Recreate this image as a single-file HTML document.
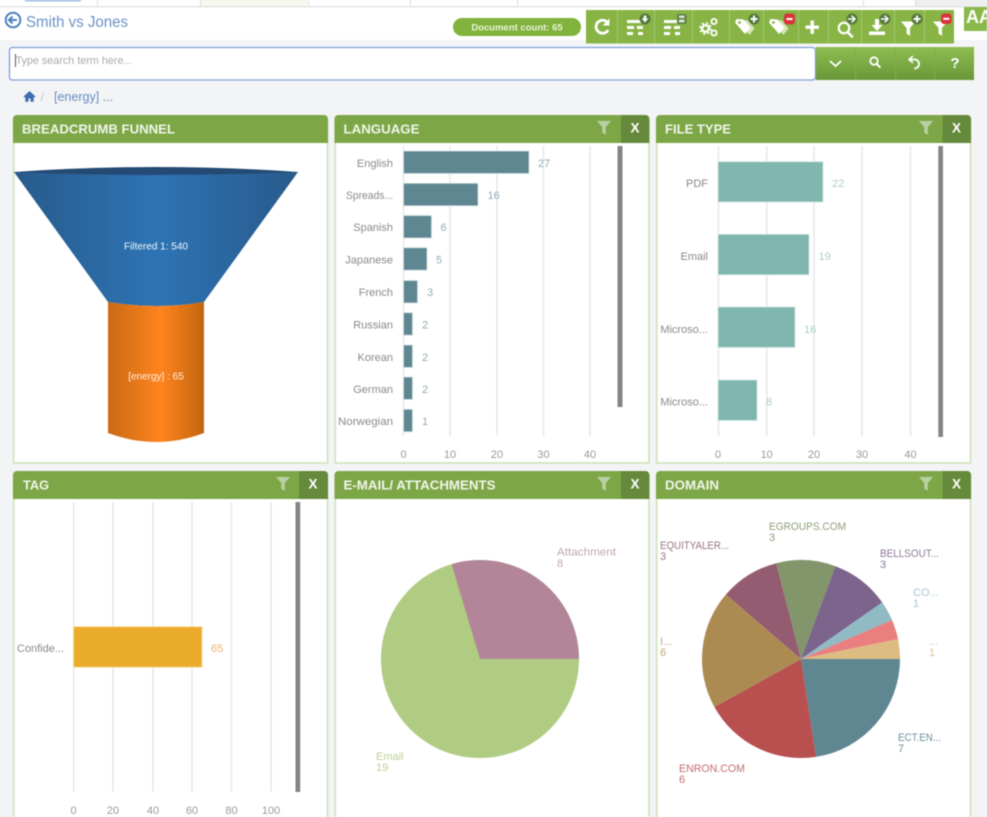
<!DOCTYPE html>
<html lang="en"><head><meta charset="utf-8"><title>Smith vs Jones</title>
<style>
html,body{margin:0;padding:0;width:987px;height:817px;overflow:hidden;background:#f3f4f6}
svg{display:block;filter:blur(.45px)}
text{font-family:"Liberation Sans",sans-serif}
.h{font-size:13px;font-weight:bold;fill:#f1f5ea}
.x{font-size:13.500px;font-weight:bold;fill:#fff}
.l{font-size:11px;fill:#8a8a8a;text-anchor:end}
.a{font-size:11px;fill:#9a9a9a;text-anchor:middle}
.g{stroke:#e4e4e4;stroke-width:1.3}
.w{fill:#fff}
.s{fill:none;stroke:#fff;stroke-linecap:round}
</style></head><body>
<svg width="987" height="817" viewBox="0 0 987 817" xmlns="http://www.w3.org/2000/svg">
<defs>
<linearGradient id="bl" x1="0" x2="1" y1="0" y2="0"><stop offset="0" stop-color="#285a8a"/><stop offset=".5" stop-color="#2e74b5"/><stop offset="1" stop-color="#285a8a"/></linearGradient>
<linearGradient id="or" x1="0" x2="1" y1="0" y2="0"><stop offset="0" stop-color="#c96a14"/><stop offset=".55" stop-color="#ff831e"/><stop offset="1" stop-color="#c2660f"/></linearGradient>
<linearGradient id="bt" x1="0" x2="0" y1="0" y2="1"><stop offset="0" stop-color="#8fbd51"/><stop offset="1" stop-color="#689838"/></linearGradient>
</defs>
<rect width="987" height="817" fill="#f3f4f6"/>
<!-- top strip -->
<rect x="0" y="0" width="915" height="6" fill="#fff"/>
<rect x="915" y="0" width="72" height="6" fill="#eeeef0"/>
<rect x="200" y="0" width="107" height="6" fill="#f5f8ec"/>
<rect x="25" y="0" width="56" height="1.500" fill="#9dbce6"/>
<g fill="#dedede"><rect x="97" y="0" width="1" height="6"/><rect x="200" y="0" width="1" height="6"/><rect x="308" y="0" width="1" height="6"/><rect x="410" y="0" width="1" height="6"/><rect x="517" y="0" width="1" height="6"/><rect x="863" y="0" width="1" height="6"/><rect x="915" y="0" width="1" height="6"/></g>
<rect x="0" y="6" width="987" height="1.500" fill="#e4e4e6"/>
<rect x="0" y="7.500" width="987" height="32.500" fill="#fff"/>
<!-- title -->
<circle cx="13" cy="20" r="7.300" fill="none" stroke="#4f7fc0" stroke-width="2"/>
<path d="M9 20h8M12.500 16.500L9 20l3.500 3.500" fill="none" stroke="#4f7fc0" stroke-width="2"/>
<text x="26" y="27" font-size="15.500" fill="#6d92c6" textLength="102" lengthAdjust="spacingAndGlyphs">Smith vs Jones</text>
<!-- pill -->
<rect x="453" y="18" width="128" height="18" rx="9" fill="#80b23c"/>
<text x="517" y="30.500" font-size="9.500" font-weight="bold" fill="#eaf3da" text-anchor="middle">Document count: 65</text>
<!-- toolbar -->
<rect x="586" y="10" width="368" height="33.500" fill="#87b445"/>
<g fill="#a2c672"><rect x="617" y="10" width="1" height="33.500"/><rect x="654" y="10" width="1" height="33.500"/><rect x="692" y="10" width="1" height="33.500"/><rect x="729" y="10" width="1" height="33.500"/><rect x="763" y="10" width="1" height="33.500"/><rect x="798" y="10" width="1" height="33.500"/><rect x="828" y="10" width="1" height="33.500"/><rect x="861" y="10" width="1" height="33.500"/><rect x="894" y="10" width="1" height="33.500"/><rect x="924" y="10" width="1" height="33.500"/></g>
<!-- refresh -->
<path d="M607.500 22.500A6.500 6.500 0 1 0 607.500 31" class="s" stroke-width="2.800" stroke-linecap="butt"/>
<path d="M609.500 18.500v7h-7z" class="w"/>
<!-- layout 1 -->
<g class="w"><rect x="627" y="20" width="16" height="3"/><rect x="627" y="26" width="7" height="3"/><rect x="637" y="26" width="6" height="3"/><rect x="627" y="32" width="6" height="3"/><rect x="638" y="32" width="5" height="3"/></g>
<circle cx="645" cy="19" r="5.500" fill="#55773b"/><path d="M643.700 15.500h2.600v3h2l-3.300 4-3.300-4h2z" class="w"/>
<!-- layout 2 -->
<g class="w"><rect x="664" y="20" width="16" height="3"/><rect x="664" y="26" width="7" height="3"/><rect x="674" y="26" width="6" height="3"/><rect x="664" y="32" width="6" height="3"/><rect x="675" y="32" width="5" height="3"/></g>
<rect x="677" y="14" width="9.500" height="10" rx="2" fill="#5e7d4a"/><rect x="679" y="15.500" width="5.500" height="2.500" fill="#d9e4cc"/><rect x="679" y="19.500" width="5.500" height="3" fill="#d9e4cc"/>
<!-- gears -->
<circle cx="705.500" cy="28.500" r="3.300" fill="none" stroke="#fff" stroke-width="2.200"/>
<circle cx="705.500" cy="28.500" r="5.300" fill="none" stroke="#fff" stroke-width="2" stroke-dasharray="2.200 2"/>
<circle cx="714" cy="21.500" r="2.600" fill="none" stroke="#fff" stroke-width="1.800"/>
<circle cx="714" cy="33" r="2.600" fill="none" stroke="#fff" stroke-width="1.800"/>
<!-- tag + -->
<path d="M737 21l3-1.500 8 1 6.500 8-5 6.500z" fill="#d6e4b5"/>
<path d="M735 22.500l1.500-3.500 7 0.500 7 8.500-5.500 6z" class="w"/><circle cx="739.500" cy="22.500" r="1.400" fill="#87b445"/>
<circle cx="754" cy="19" r="5.500" fill="#55773b"/><path d="M753 15.500h2v2.500h2.500v2h-2.500v2.500h-2v-2.500h-2.500v-2h2.500z" class="w"/>
<!-- tag - -->
<path d="M771 21l3-1.500 8 1 6.500 8-5 6.500z" fill="#d6e4b5"/>
<path d="M769 22.500l1.500-3.500 7 0.500 7 8.500-5.500 6z" class="w"/><circle cx="773.500" cy="22.500" r="1.400" fill="#87b445"/>
<rect x="784" y="13.500" width="11" height="11" rx="3" fill="#d9343c"/><rect x="786.500" y="18" width="6" height="2" class="w"/>
<!-- plus -->
<path d="M810.500 20.500h3.400v5h5v3.400h-5v5h-3.400v-5h-5v-3.400h5z" class="w"/>
<!-- search arrow -->
<circle cx="844" cy="28" r="5.300" fill="none" stroke="#fff" stroke-width="2.200"/><path d="M848 32.500l4 4" class="s" stroke-width="2.600"/>
<circle cx="852" cy="19" r="5.500" fill="#55773b"/><path d="M848.500 19h6M852 16l3 3-3 3" class="s" stroke-width="1.500"/>
<!-- download -->
<path d="M875 19h4v6h3.500l-5.500 6-5.500-6h3.500z" class="w"/><rect x="869" y="31.500" width="16" height="3.500" class="w"/>
<circle cx="885" cy="19" r="5.500" fill="#55773b"/><path d="M881.500 19h6M885 16l3 3-3 3" class="s" stroke-width="1.500"/>
<!-- filter + -->
<path d="M901 21.500h14.500l-5.500 6.500v8l-3.500-2.500v-5.500z" class="w"/>
<circle cx="917" cy="19" r="5.500" fill="#55773b"/><path d="M916 15.500h2v2.500h2.500v2h-2.500v2.500h-2v-2.500h-2.500v-2h2.500z" class="w"/>
<!-- filter - -->
<path d="M933 21.500h14.500l-5.500 6.500v8l-3.500-2.500v-5.500z" class="w"/>
<rect x="941" y="13.500" width="10.500" height="10.500" rx="3" fill="#d9343c"/><rect x="943.300" y="17.800" width="6" height="2" class="w"/>
<!-- logo -->
<rect x="964" y="7" width="23" height="24" fill="#8ab84a"/>
<text x="966" y="23" font-size="18" font-weight="bold" fill="#fff">AA</text>
<!-- search -->
<rect x="9.500" y="47.500" width="806" height="32.500" rx="3" fill="#fff" stroke="#7fa0d3" stroke-width="1.300"/>
<rect x="15" y="54" width="1" height="13" fill="#555"/>
<text x="15.500" y="64" font-size="10.800" fill="#aaaaaa">Type search term here...</text>
<rect x="816" y="47" width="158" height="33" fill="url(#bt)"/>
<g fill="#7fae46"><rect x="855" y="47" width="1" height="33"/><rect x="895" y="47" width="1" height="33"/><rect x="934" y="47" width="1" height="33"/></g>
<path d="M830.500 61.500l5 4.500 5-4.500" class="s" stroke-width="1.800"/>
<circle cx="874" cy="61" r="3.700" fill="none" stroke="#fff" stroke-width="1.800"/><path d="M876.800 64l3 3" class="s" stroke-width="2"/>
<path d="M910 59.500h4a4.500 4.500 0 0 1 1 9" class="s" stroke-width="1.800"/><path d="M912.500 56.500l-3.500 3 3.500 3" class="s" stroke-width="1.500"/>
<text x="955" y="68" font-size="15" font-weight="bold" fill="#fff" text-anchor="middle">?</text>
<!-- breadcrumb -->
<path d="M23.500 96.500L29.500 91l6 5.500-1 1-.8-.7v5h-3.200v-3.300h-2v3.300h-3.200v-5l-.8.700z" fill="#3f6db3"/>
<text x="40.500" y="101" font-size="12" fill="#c5c5c5">/</text>
<text x="54" y="101" font-size="12.500" fill="#6a8dc4">[energy] ...</text>

<!-- Panels -->
<g fill="#fff" stroke="#d3e4bf" stroke-width="1.800">
<rect x="13.700" y="120" width="313.800" height="343"/>
<rect x="335.200" y="120" width="313.800" height="343"/>
<rect x="656.700" y="120" width="313.800" height="343"/>
<rect x="13.700" y="476" width="313.800" height="350"/>
<rect x="335.200" y="476" width="313.800" height="350"/>
<rect x="656.700" y="476" width="313.800" height="350"/>
</g>
<g fill="#7da747">
<path d="M13 143v-24a4 4 0 0 1 4-4h307a4 4 0 0 1 4 4v24z"/>
<path d="M334.500 143v-24a4 4 0 0 1 4-4h307a4 4 0 0 1 4 4v24z"/>
<path d="M656 143v-24a4 4 0 0 1 4-4h307a4 4 0 0 1 4 4v24z"/>
<path d="M13 499v-24a4 4 0 0 1 4-4h307a4 4 0 0 1 4 4v24z"/>
<path d="M334.500 499v-24a4 4 0 0 1 4-4h307a4 4 0 0 1 4 4v24z"/>
<path d="M656 499v-24a4 4 0 0 1 4-4h307a4 4 0 0 1 4 4v24z"/>
</g>
<g fill="#668a3b">
<path d="M621 115h24a4 4 0 0 1 4 4v24h-28z"/>
<path d="M942.500 115h24.500a4 4 0 0 1 4 4v24h-28.500z"/>
<path d="M299 471h25a4 4 0 0 1 4 4v24h-29z"/>
<path d="M621 471h24a4 4 0 0 1 4 4v24h-28z"/>
<path d="M942.500 471h24.500a4 4 0 0 1 4 4v24h-28.500z"/>
</g>
<g fill="#b9d0a2">
<path d="M597 121h14l-5.200 6v8l-3.600-2.500v-5.500z"/>
<path d="M919 121h14l-5.200 6v8l-3.600-2.500v-5.500z"/>
<path d="M276 477h14l-5.200 6v8l-3.600-2.500v-5.500z"/>
<path d="M597 477h14l-5.200 6v8l-3.600-2.500v-5.500z"/>
<path d="M919 477h14l-5.200 6v8l-3.600-2.500v-5.500z"/>
</g>
<text class="h" x="22" y="133.500" textLength="153" lengthAdjust="spacingAndGlyphs">BREADCRUMB FUNNEL</text>
<text class="h" x="343.500" y="133.500" textLength="76" lengthAdjust="spacingAndGlyphs">LANGUAGE</text>
<text class="h" x="665" y="133.500" textLength="66" lengthAdjust="spacingAndGlyphs">FILE TYPE</text>
<text class="h" x="23" y="489.500" textLength="26" lengthAdjust="spacingAndGlyphs">TAG</text>
<text class="h" x="343.500" y="489.500" textLength="152" lengthAdjust="spacingAndGlyphs">E-MAIL/ ATTACHMENTS</text>
<text class="h" x="665" y="489.500" textLength="54" lengthAdjust="spacingAndGlyphs">DOMAIN</text>
<text class="x" x="635" y="132.500" text-anchor="middle">X</text>
<text class="x" x="956.500" y="132.500" text-anchor="middle">X</text>
<text class="x" x="313" y="488.500" text-anchor="middle">X</text>
<text class="x" x="635" y="488.500" text-anchor="middle">X</text>
<text class="x" x="956.500" y="488.500" text-anchor="middle">X</text>

<!-- funnel -->
<path d="M14 172L108 302Q156 310 204 302L298 172z" fill="url(#bl)"/>
<path d="M14 172Q156 162 298 172Q156 178 14 172z" fill="#234a73"/>
<path d="M108 302Q156 310 204 302V433Q156 451 108 433z" fill="url(#or)"/>
<text x="156" y="249.500" font-size="10" fill="#f2f8fd" text-anchor="middle">Filtered 1: 540</text>
<text x="156" y="379.500" font-size="10" fill="#fff0e2" text-anchor="middle">[energy] : 65</text>

<!-- language -->
<g class="g"><path d="M403.500 146V436M450 146V436M497 146V436M543.500 146V436M590 146V436"/></g>
<g fill="#5f8792" stroke="#d5e2e4" stroke-width=".8">
<rect x="403.500" y="151" width="125.500" height="22.500"/>
<rect x="403.500" y="183.300" width="74.500" height="22.500"/>
<rect x="403.500" y="215.500" width="28" height="22.500"/>
<rect x="403.500" y="247.700" width="23.500" height="22.500"/>
<rect x="403.500" y="280.500" width="14" height="22.500"/>
<rect x="403.500" y="312.700" width="9" height="22.500"/>
<rect x="403.500" y="345" width="9" height="22.500"/>
<rect x="403.500" y="377" width="9" height="22.500"/>
<rect x="403.500" y="409.300" width="9" height="22.500"/>
</g>
<rect x="617.500" y="146" width="5" height="261" fill="#848484"/>
<g class="l">
<text x="393" y="167">English</text><text x="393" y="199" textLength="47" lengthAdjust="spacingAndGlyphs">Spreads...</text><text x="393" y="231">Spanish</text><text x="393" y="263.500">Japanese</text><text x="393" y="296">French</text><text x="393" y="328.500">Russian</text><text x="393" y="361">Korean</text><text x="393" y="393">German</text><text x="393" y="425" textLength="55" lengthAdjust="spacingAndGlyphs">Norwegian</text>
</g>
<g font-size="11" fill="#93acb5">
<text x="538" y="167">27</text><text x="487.500" y="199">16</text><text x="440.500" y="231">6</text><text x="436" y="263.500">5</text><text x="427" y="296">3</text><text x="422" y="328.500">2</text><text x="422" y="361">2</text><text x="422" y="393">2</text><text x="422" y="425">1</text>
</g>
<g class="a"><text x="403.500" y="458">0</text><text x="450" y="458">10</text><text x="497" y="458">20</text><text x="543.500" y="458">30</text><text x="590" y="458">40</text></g>

<!-- file type -->
<g class="g"><path d="M718.500 146V436M766.700 146V436M814 146V436M862 146V436M910.500 146V436"/></g>
<g fill="#7fb7b0" stroke="#d3e8e5" stroke-width=".8">
<rect x="718" y="161.700" width="105" height="40.300"/>
<rect x="718" y="234.300" width="91" height="40.500"/>
<rect x="718" y="307" width="77" height="40.500"/>
<rect x="718" y="380" width="39" height="40.500"/>
</g>
<rect x="938.300" y="146" width="4.700" height="291" fill="#848484"/>
<g class="l"><text x="708" y="187">PDF</text><text x="708" y="260">Email</text><text x="708" y="333">Microso...</text><text x="708" y="405.500">Microso...</text></g>
<g font-size="11" fill="#a9d1cc"><text x="832" y="187">22</text><text x="818.500" y="260">19</text><text x="804" y="333">16</text><text x="766" y="405.500">8</text></g>
<g class="a"><text x="718" y="458">0</text><text x="766.700" y="458">10</text><text x="814" y="458">20</text><text x="862" y="458">30</text><text x="910.500" y="458">40</text></g>

<!-- tag -->
<g class="g"><path d="M73.700 502V792M113 502V792M153 502V792M192 502V792M231.500 502V792M271 502V792"/></g>
<rect x="73.500" y="626.700" width="128.500" height="40.500" fill="#ebab2b" stroke="#f7dca0" stroke-width=".8"/>
<rect x="295.500" y="502" width="4.700" height="290" fill="#848484"/>
<text class="l" x="64" y="652">Confide...</text>
<text x="211" y="652" font-size="11" fill="#efb36c">65</text>
<g class="a"><text x="73.500" y="814">0</text><text x="113" y="814">20</text><text x="153" y="814">40</text><text x="192" y="814">60</text><text x="231.500" y="814">80</text><text x="271" y="814">100</text></g>

<!-- email pie -->
<circle cx="480" cy="659" r="99" fill="#b0cb82"/>
<path d="M480 659L451.600 564.200A99 99 0 0 1 579 659z" fill="#b28698"/>
<g font-size="11"><text x="557" y="555.500" fill="#c4a4b4" textLength="59" lengthAdjust="spacingAndGlyphs">Attachment</text><text x="557" y="567" fill="#c4a4b4">8</text>
<text x="376" y="760" fill="#bcd29a">Email</text><text x="376" y="771" fill="#bcd29a">19</text></g>

<!-- domain pie -->
<path d="M801 659L900 659A99 99 0 0 1 816 756.900z" fill="#5f8792"/>
<path d="M801 659L816 756.900A99 99 0 0 1 714.400 707z" fill="#b85050"/>
<path d="M801 659L714.400 707A99 99 0 0 1 725.900 594.500z" fill="#ac8b52"/>
<path d="M801 659L725.900 594.500A99 99 0 0 1 776.200 563.200z" fill="#945c70"/>
<path d="M801 659L776.200 563.200A99 99 0 0 1 835.400 566.200z" fill="#83956a"/>
<path d="M801 659L835.400 566.200A99 99 0 0 1 882.200 602.400z" fill="#7c648c"/>
<path d="M801 659L882.200 602.400A99 99 0 0 1 892 620z" fill="#90bac4"/>
<path d="M801 659L892 620A99 99 0 0 1 898 639.100z" fill="#ea7f7f"/>
<path d="M801 659L898 639.100A99 99 0 0 1 900 659z" fill="#dcbc82"/>
<g font-size="11">
<g fill="#8f9e78"><text x="769" y="530" textLength="77" lengthAdjust="spacingAndGlyphs">EGROUPS.COM</text><text x="769" y="541">3</text></g>
<g fill="#9c7486"><text x="660" y="549" textLength="69" lengthAdjust="spacingAndGlyphs">EQUITYALER...</text><text x="660" y="560">3</text></g>
<g fill="#8e7a9c"><text x="880" y="557" textLength="59" lengthAdjust="spacingAndGlyphs">BELLSOUT...</text><text x="880" y="568">3</text></g>
<g fill="#a5c8d0"><text x="913" y="596">CO...</text><text x="913" y="607">1</text></g>
<g fill="#e0c496"><text x="929" y="645">...</text><text x="929" y="656">1</text></g>
<g fill="#c2a67c"><text x="660" y="645">I...</text><text x="660" y="656">6</text></g>
<g fill="#6f919b"><text x="898" y="741" textLength="43" lengthAdjust="spacingAndGlyphs">ECT.EN...</text><text x="898" y="752">7</text></g>
<g fill="#c26c70"><text x="679" y="772" textLength="66" lengthAdjust="spacingAndGlyphs">ENRON.COM</text><text x="679" y="783">6</text></g>
</g>
</svg>
</body></html>
